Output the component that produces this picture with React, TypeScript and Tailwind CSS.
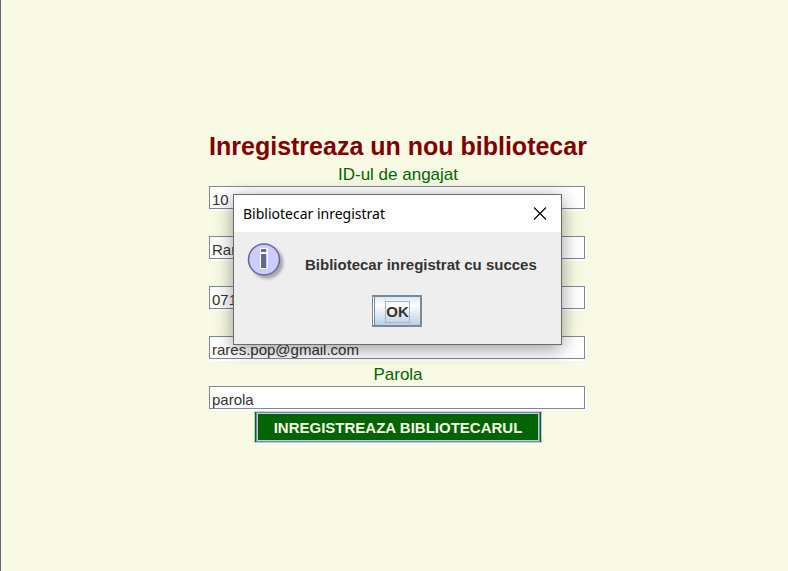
import { useId } from "react";

type FieldProps = { label: string; value: string; type?: string };

function Field({ label, value, type = "text" }: FieldProps) {
  const id = useId();
  return (
    <div className="flex flex-col">
      <label htmlFor={id} className="h-[25px] pt-px text-center text-[17px] leading-[25px] text-[#006400]">
        {label}
      </label>
      <div className="h-[25px] pr-[2px] pb-[2px]">
        <input
          id={id}
          type={type}
          defaultValue={value}
          className="block h-full w-full border border-[#7a8a99] bg-white px-[2px] pt-1 text-[15px] leading-4 text-[#333333] shadow-[2px_2px_0_#ffffff] outline-none"
        />
      </div>
    </div>
  );
}

function InfoIcon() {
  return (
    <svg width="40" height="40" viewBox="0 0 40 40" className="shrink-0" aria-hidden="true">
      <defs>
        <filter id="infoShadow" x="-20%" y="-20%" width="150%" height="150%">
          <feDropShadow dx="3" dy="3" stdDeviation="1.5" floodColor="#000" floodOpacity="0.3" />
        </filter>
      </defs>
      <circle cx="17" cy="16.5" r="15.5" fill="#ccccff" stroke="#666699" strokeWidth="1.5" filter="url(#infoShadow)" />
      <path d="M13 5h8v21h-8z" fill="#fff" />
      <path d="M14 6h5v3h-5zM14 11h5v14h-5z" fill="#666699" />
      <path d="M19 6h1v3h-1zM19 11h1v14h-1z" fill="#ccccff" />
    </svg>
  );
}

function Dialog() {
  return (
    <div
      role="dialog"
      aria-labelledby="dialog-title"
      className="absolute top-[63px] left-6 w-[329px] border border-[#6b6b6b] bg-[#eeeeee] shadow-[0_4px_18px_rgba(0,0,0,0.4)]"
    >
      <div className="flex h-[37px] items-center justify-between bg-white pr-[14px] pl-[9px]">
        <h2 id="dialog-title" className="font-['Noto_Sans',sans-serif] text-[14px] text-black">
          Bibliotecar inregistrat
        </h2>
        <button type="button" aria-label="Close" className="block">
          <svg width="14" height="14" viewBox="0 0 14 14" aria-hidden="true">
            <path d="M1 0.5l12 12M13 0.5l-12 12" stroke="#000" strokeWidth="1.1" />
          </svg>
        </button>
      </div>
      <div className="flex pt-[11px] pl-[13px]">
        <InfoIcon />
        <p className="pt-3 pl-[18px] text-[15px] leading-5 font-bold text-[#333333]">
          Bibliotecar inregistrat cu succes
        </p>
      </div>
      <div className="flex justify-center pr-px pt-3 pb-[17px]">
        <button
          type="button"
          className="h-8 w-[50px] border-2 border-l border-[#7a8a99] bg-white pl-px text-[15px] font-bold text-[#333333]"
        >
          <span className="flex h-full items-center justify-center border-l border-[#7a8a99] bg-linear-to-b from-[#dde8f3] via-white via-30% to-[#b8cfe5] pt-[2px]">
            <span className="border border-[#a3b8cc] leading-5">OK</span>
          </span>
        </button>
      </div>
    </div>
  );
}

export default function App() {
  return (
    <main className="flex min-h-screen items-center justify-center border-l border-[#5f6b7a] bg-[#f8fae3] pt-[3px] pl-[7px] font-['Liberation_Sans',Arial,sans-serif]">
      <div className="relative w-full max-w-[378px]">
        <form className="flex flex-col" onSubmit={(e) => e.preventDefault()}>
          <h1 className="text-center text-[25px] leading-[30px] font-bold whitespace-nowrap text-[#800000]">
            Inregistreaza un nou bibliotecar
          </h1>
          <Field label="ID-ul de angajat" value="10" />
          <Field label="Nume" value="Rares Pop" />
          <Field label="Telefon" value="0712345678" />
          <Field label="Email" value="rares.pop@gmail.com" type="email" />
          <Field label="Parola" value="parola" />
          <button
            type="submit"
            className="h-8 self-center border border-[#b8cfe5] bg-[#006400] px-px text-[15px] font-bold text-[#f8fae3]"
          >
            <span className="block h-full border border-[#7a8a99]">
              <span className="flex h-full items-center border border-[#b8cfe5] px-4 pt-[3px]">
                INREGISTREAZA BIBLIOTECARUL
              </span>
            </span>
          </button>
        </form>
        <Dialog />
      </div>
    </main>
  );
}
